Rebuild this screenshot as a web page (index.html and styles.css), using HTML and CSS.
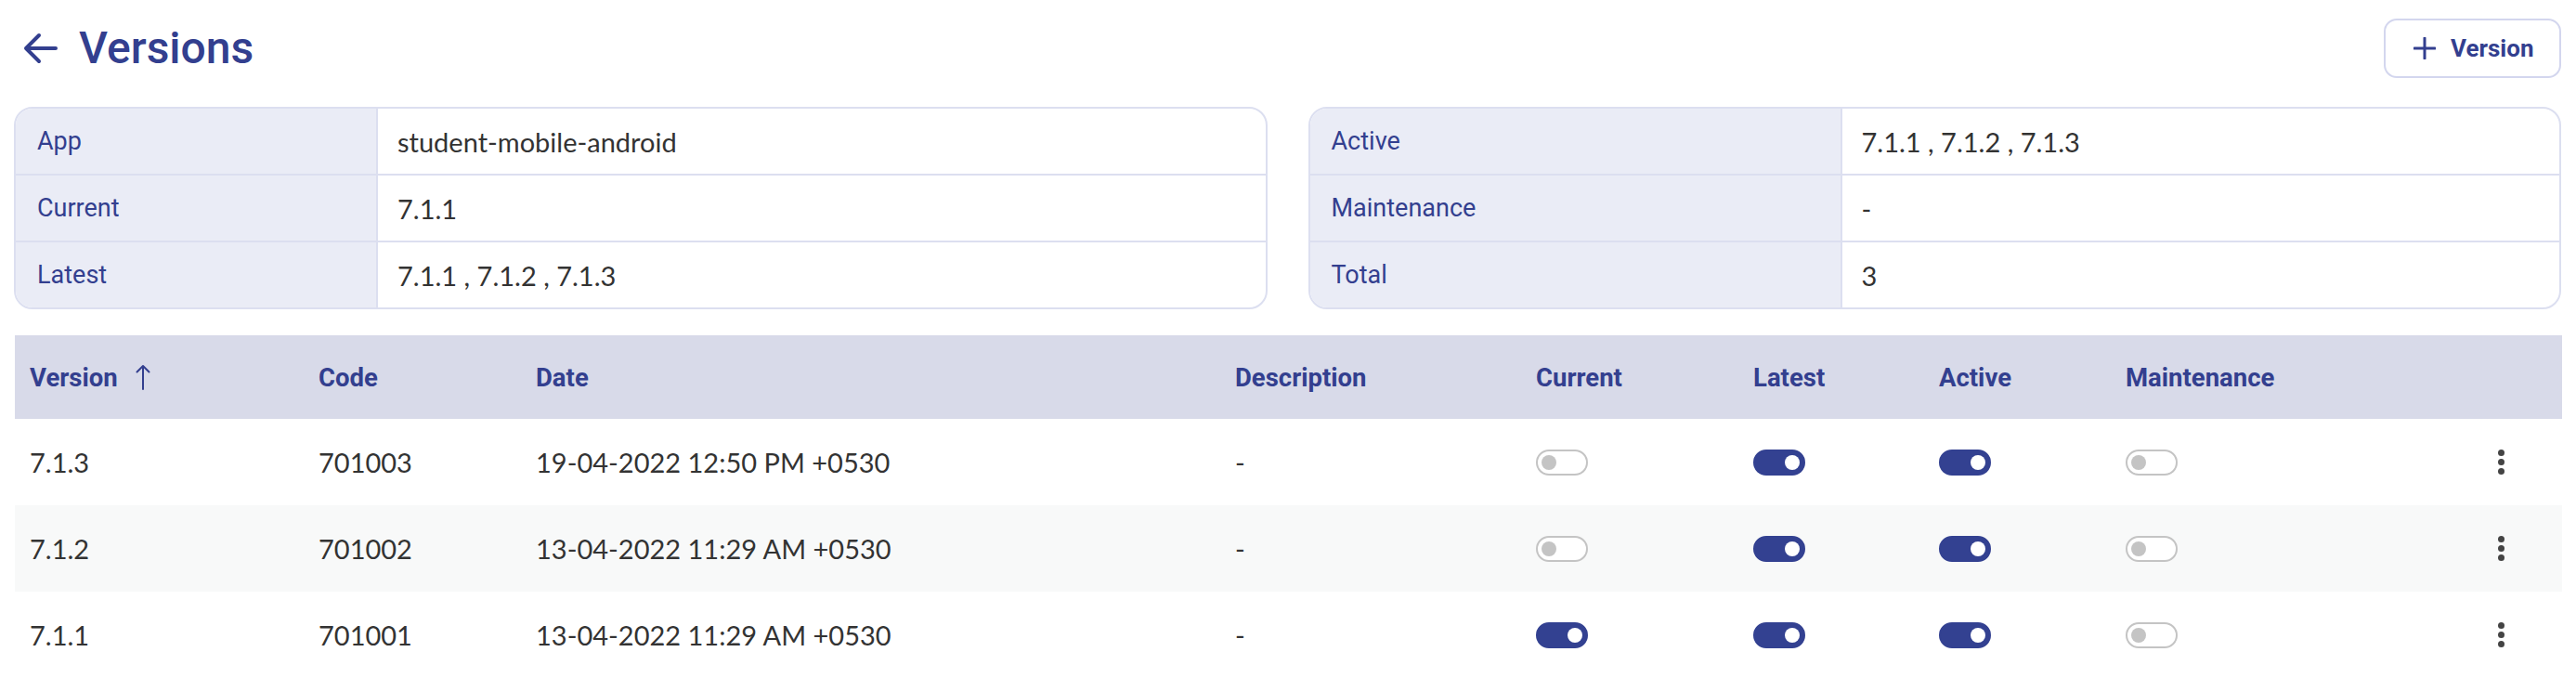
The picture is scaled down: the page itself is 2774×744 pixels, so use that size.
FILE: index.html
```html
<!DOCTYPE html>
<html lang="en">
<head>
<meta charset="utf-8">
<title>Versions</title>
<link rel="stylesheet" href="styles.css">
</head>
<body>
<div class="page">
  <header class="topbar">
    <div class="title">
      <svg class="back" viewBox="0 0 37 34" width="37" height="34" aria-hidden="true">
        <path d="M35 17 H3 M17 3 L3 17 L17 31" fill="none" stroke="#333f8f" stroke-width="4" stroke-linecap="round" stroke-linejoin="round"/>
      </svg>
      <h1>Versions</h1>
    </div>
    <button class="add-btn">
      <svg viewBox="0 0 24 24" width="24" height="24" aria-hidden="true">
        <path d="M12 1 V23 M1 12 H23" fill="none" stroke="#333f8f" stroke-width="3" stroke-linecap="round"/>
      </svg>
      <span>Version</span>
    </button>
  </header>

  <section class="cards">
    <div class="card card-left">
      <div class="lbl">App</div><div class="val">student-mobile-android</div>
      <div class="lbl">Current</div><div class="val">7.1.1</div>
      <div class="lbl last">Latest</div><div class="val last">7.1.1 , 7.1.2 , 7.1.3</div>
    </div>
    <div class="card card-right">
      <div class="lbl">Active</div><div class="val">7.1.1 , 7.1.2 , 7.1.3</div>
      <div class="lbl">Maintenance</div><div class="val">-</div>
      <div class="lbl last">Total</div><div class="val last">3</div>
    </div>
  </section>

  <section class="table">
    <div class="row head">
      <div class="cell">Version
        <svg class="sort" viewBox="0 0 16 28" width="16" height="28" aria-hidden="true">
          <path d="M8 27 V2 M1.5 8.5 L8 2 L14.5 8.5" fill="none" stroke="#333f8f" stroke-width="2" stroke-linecap="round" stroke-linejoin="round"/>
        </svg>
      </div>
      <div class="cell">Code</div>
      <div class="cell">Date</div>
      <div class="cell">Description</div>
      <div class="cell">Current</div>
      <div class="cell">Latest</div>
      <div class="cell">Active</div>
      <div class="cell">Maintenance</div>
      <div class="cell"></div>
    </div>

    <div class="row body">
      <div class="cell">7.1.3</div>
      <div class="cell">701003</div>
      <div class="cell">19-04-2022 12:50 PM +0530</div>
      <div class="cell">-</div>
      <div class="cell"><span class="toggle"></span></div>
      <div class="cell"><span class="toggle on"></span></div>
      <div class="cell"><span class="toggle on"></span></div>
      <div class="cell"><span class="toggle"></span></div>
      <div class="cell menu"><span class="kebab"><i></i><i></i><i></i></span></div>
    </div>

    <div class="row body alt">
      <div class="cell">7.1.2</div>
      <div class="cell">701002</div>
      <div class="cell">13-04-2022 11:29 AM +0530</div>
      <div class="cell">-</div>
      <div class="cell"><span class="toggle"></span></div>
      <div class="cell"><span class="toggle on"></span></div>
      <div class="cell"><span class="toggle on"></span></div>
      <div class="cell"><span class="toggle"></span></div>
      <div class="cell menu"><span class="kebab"><i></i><i></i><i></i></span></div>
    </div>

    <div class="row body">
      <div class="cell">7.1.1</div>
      <div class="cell">701001</div>
      <div class="cell">13-04-2022 11:29 AM +0530</div>
      <div class="cell">-</div>
      <div class="cell"><span class="toggle on"></span></div>
      <div class="cell"><span class="toggle on"></span></div>
      <div class="cell"><span class="toggle on"></span></div>
      <div class="cell"><span class="toggle"></span></div>
      <div class="cell menu"><span class="kebab"><i></i><i></i><i></i></span></div>
    </div>
  </section>
</div>
</body>
</html>
```

FILE: styles.css
```css
* { box-sizing: border-box; }

html, body {
  margin: 0;
  background: #ffffff;
}

body {
  font-family: "Lato", "Liberation Sans", sans-serif;
  color: #333333;
}

.page {
  padding: 20px 16px 0 15px;
}

.topbar {
  display: flex;
  align-items: center;
  justify-content: space-between;
  height: 64px;
}

.title {
  display: flex;
  align-items: center;
  gap: 23px;
  padding-left: 10px;
}

.back { display: block; }

.title h1 {
  margin: 0;
  font-family: "Roboto", "Noto Sans", sans-serif;
  font-weight: 500;
  font-size: 48px;
  line-height: 1;
  color: #333f8f;
}

.add-btn {
  display: flex;
  align-items: center;
  gap: 16px;
  height: 64px;
  width: 191px;
  padding: 0 0 0 30px;
  background: #ffffff;
  border: 2px solid #d3d6ee;
  border-radius: 14px;
  font-family: "Roboto", "Noto Sans", sans-serif;
  font-weight: 700;
  font-size: 26px;
  color: #333f8f;
}

.add-btn svg { display: block; }

.cards {
  display: flex;
  gap: 44px;
  margin-top: 31px;
}

.card {
  flex: 1 1 0;
  display: grid;
  border: 2px solid #dcdff0;
  border-radius: 20px;
  overflow: hidden;
}

.card-left { grid-template-columns: 390px 1fr; }
.card-right { grid-template-columns: 573px 1fr; }

.lbl, .val {
  height: 72px;
  display: flex;
  align-items: center;
  border-bottom: 2px solid #dcdff0;
}

.lbl {
  background: #eaecf6;
  border-right: 2px solid #dcdff0;
  padding-left: 23px;
  font-family: "Roboto", "Noto Sans", sans-serif;
  font-size: 27px;
  color: #333f8f;
}

.val {
  padding-left: 21px;
  font-size: 29px;
  color: #333333;
}

.lbl.last, .val.last {
  border-bottom: none;
  height: 70px;
}

.table {
  margin-top: 28px;
  margin-left: 1px;
  margin-right: -1px;
}

.row {
  display: grid;
  grid-template-columns: 311px 234px 753px 324px 234px 200px 201px 327px 1fr;
  align-items: center;
}

.row .cell {
  padding-left: 16px;
  display: flex;
  align-items: center;
}

.head {
  height: 90px;
  background: #d8dae9;
}

.head .cell {
  font-family: "Roboto", "Noto Sans", sans-serif;
  font-weight: 700;
  font-size: 27.5px;
  color: #333f8f;
}

.sort {
  margin-left: 19px;
  display: block;
}

.body {
  height: 93px;
  font-size: 29px;
  color: #333333;
}

.alt { background: #f8f9f9; }

.toggle {
  position: relative;
  display: block;
  width: 56px;
  height: 28px;
  border: 2px solid #c4c4c4;
  border-radius: 14px;
  background: #ffffff;
}

.toggle::after {
  content: "";
  position: absolute;
  top: 4px;
  left: 4px;
  width: 16px;
  height: 16px;
  border-radius: 50%;
  background: #c4c4c4;
}

.toggle.on {
  background: #334191;
  border-color: #334191;
}

.toggle.on::after {
  left: auto;
  right: 4px;
  background: #ffffff;
}

.menu {
  justify-content: flex-end;
  padding-right: 62px;
}

.kebab {
  display: flex;
  flex-direction: column;
  gap: 3px;
}

.kebab i {
  display: block;
  width: 7px;
  height: 7px;
  border-radius: 50%;
  background: #444444;
}
```
